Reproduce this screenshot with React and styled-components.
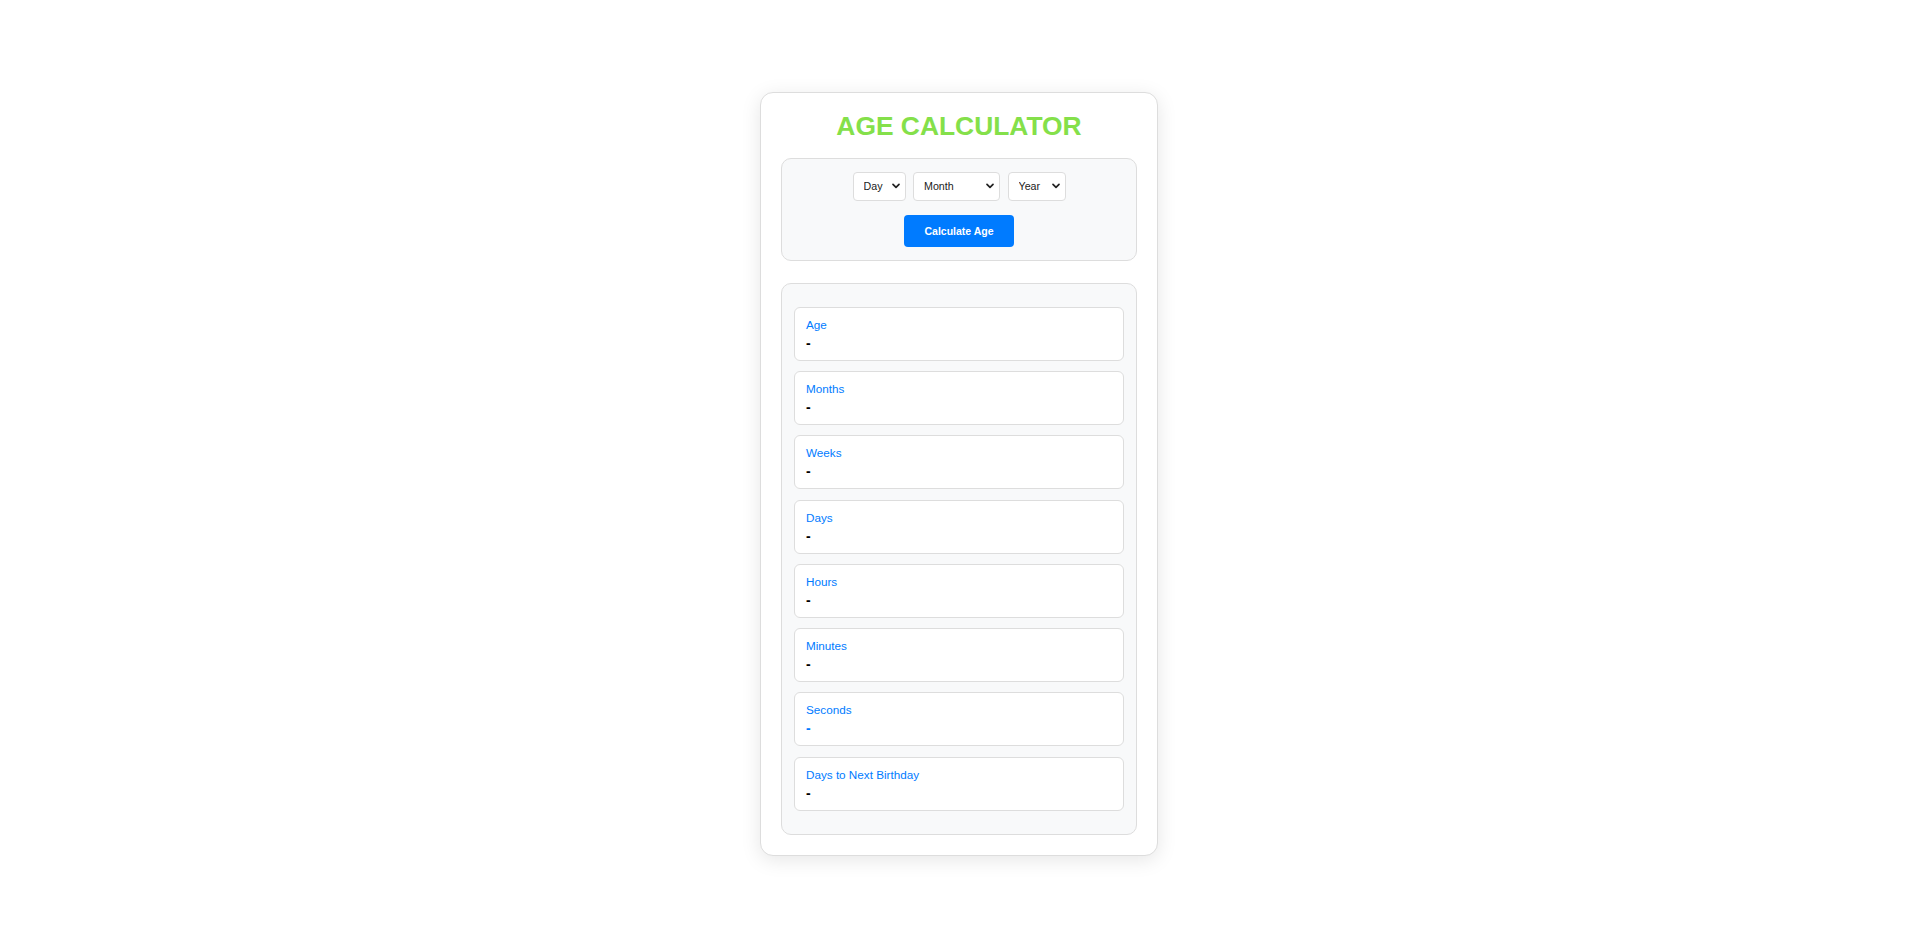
import React, { useState } from 'react';
import styled, { createGlobalStyle } from 'styled-components';

// Styles

const GlobalStyle = createGlobalStyle`
  * {
    box-sizing: border-box;
  }

  body {
    margin: 0;
    background: #ffffff;
    font-family: "Liberation Sans", Arial, sans-serif;
  }
`

const Page = styled.div`
  min-height: 100vh;
  display: flex;
  align-items: center;
  justify-content: center;
`

const Card = styled.div`
  width: 398px;
  padding: 20px;
  background: #ffffff;
  border: 1px solid #dddddd;
  border-radius: 13px;
  box-shadow: 0 4px 20px rgba(0, 0, 0, 0.1);
`

const Title = styled.h1`
  margin: 0 0 18px;
  font-size: 26.4px;
  line-height: 1;
  font-weight: bold;
  text-align: center;
  color: #84e04a;
`

const Panel = styled.div`
  background: #f8f9fa;
  border: 1px solid #dddddd;
  border-radius: 10px;
  padding: ${props => props.$pad};
  margin-bottom: ${props => props.$gap || 0}px;
`

const SelectRow = styled.div`
  display: flex;
  justify-content: center;
  gap: 7.5px;
  margin-bottom: 14.3px;
`

const SelectWrap = styled.div`
  position: relative;
  width: ${props => props.$width}px;
  height: 29.4px;

  svg {
    position: absolute;
    right: 6px;
    top: 50%;
    margin-top: -4px;
    pointer-events: none;
  }
`

const Select = styled.select`
  appearance: none;
  -webkit-appearance: none;
  width: 100%;
  height: 100%;
  padding: 0 20px 0 10px;
  font-family: "Liberation Sans", Arial, sans-serif;
  font-size: 10.7px;
  color: #222222;
  background: #ffffff;
  border: 1px solid #dddddd;
  border-radius: 4px;
  outline: none;
`

const ButtonRow = styled.div`
  display: flex;
  justify-content: center;
`

const Button = styled.button`
  width: 110px;
  height: 32px;
  border: none;
  border-radius: 4px;
  background: #007bff;
  color: #ffffff;
  font-family: "Liberation Sans", Arial, sans-serif;
  font-size: 10.5px;
  font-weight: bold;
  cursor: pointer;
`

const ResultList = styled.div`
  display: flex;
  flex-direction: column;
  gap: 10.3px;
`

const ResultItem = styled.div`
  height: 54px;
  padding: 10px 11px 9px;
  background: #ffffff;
  border: 1px solid #dddddd;
  border-radius: 6px;
`

const Label = styled.div`
  font-size: 11.7px;
  line-height: 14px;
  color: #007bff;
  margin-bottom: 3px;
`

const Value = styled.div`
  font-size: 14px;
  line-height: 16px;
  font-weight: bold;
  color: ${props => props.$accent ? '#007bff' : '#000000'};
`

const MONTHS = [
  'January', 'February', 'March', 'April', 'May', 'June',
  'July', 'August', 'September', 'October', 'November', 'December'
];

const RESULTS = [
  { label: 'Age' },
  { label: 'Months' },
  { label: 'Weeks' },
  { label: 'Days' },
  { label: 'Hours' },
  { label: 'Minutes' },
  { label: 'Seconds', accent: true },
  { label: 'Days to Next Birthday' }
];

const Chevron = () => (
  <svg width="8" height="8" viewBox="0 0 8 8">
    <path d="M1 2.3 L4 5.3 L7 2.3" fill="none" stroke="#222" strokeWidth="1.7" strokeLinecap="round" strokeLinejoin="round" />
  </svg>
);

const Dropdown = ({ width, value, onChange, children }) => (
  <SelectWrap $width={width}>
    <Select value={value} onChange={e => onChange(e.target.value)}>
      {children}
    </Select>
    <Chevron />
  </SelectWrap>
);

const App = () => {
  const [day, setDay] = useState('');
  const [month, setMonth] = useState('');
  const [year, setYear] = useState('');

  const years = [];
  for (let y = 2025; y >= 1900; y--) years.push(y);

  return (
    <Page>
      <GlobalStyle />
      <Card>
        <Title>AGE CALCULATOR</Title>
        <Panel $pad="13px" $gap={21.3}>
          <SelectRow>
            <Dropdown width={53} value={day} onChange={setDay}>
              <option value="">Day</option>
              {Array.from({ length: 31 }, (_, i) => (
                <option key={i} value={i + 1}>{i + 1}</option>
              ))}
            </Dropdown>
            <Dropdown width={87} value={month} onChange={setMonth}>
              <option value="">Month</option>
              {MONTHS.map((m, i) => <option key={m} value={i + 1}>{m}</option>)}
            </Dropdown>
            <Dropdown width={58} value={year} onChange={setYear}>
              <option value="">Year</option>
              {years.map(y => <option key={y} value={y}>{y}</option>)}
            </Dropdown>
          </SelectRow>
          <ButtonRow>
            <Button>Calculate Age</Button>
          </ButtonRow>
        </Panel>
        <Panel $pad="23px 12px">
          <ResultList>
            {RESULTS.map(r => (
              <ResultItem key={r.label}>
                <Label>{r.label}</Label>
                <Value $accent={r.accent}>-</Value>
              </ResultItem>
            ))}
          </ResultList>
        </Panel>
      </Card>
    </Page>
  );
}

export default App;
